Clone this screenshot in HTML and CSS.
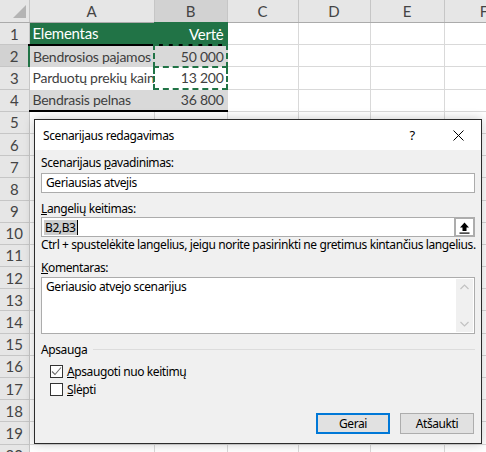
FILE: index.html
```html
<!DOCTYPE html>
<html lang="lt">
<head>
  <meta charset="UTF-8" />
  <title>Scenarijaus redagavimas</title>
  <link rel="stylesheet" href="styles.css">
</head>
<body>
  <div class="sheet">
    <table class="grid">
      <colgroup>
        <col class="c-rh"><col class="c-a"><col class="c-b"><col class="c-c"><col class="c-d"><col class="c-e"><col class="c-f">
      </colgroup>
      <tr class="colhead">
        <th class="corner"><svg width="29" height="22" viewBox="0 0 29 22"><polygon points="13,18 26,18 26,5" fill="#b4b4b4"/></svg></th>
        <th>A</th><th class="sel">B</th><th>C</th><th>D</th><th>E</th><th>F</th>
      </tr>
      <tr class="head-row">
        <th>1</th><td class="tbl-head">Elementas</td><td class="tbl-head num">Vertė</td><td></td><td></td><td></td><td></td>
      </tr>
      <tr>
        <th class="sel">2</th><td class="band">Bendrosios pajamos</td><td class="band num">50 000</td><td></td><td></td><td></td><td></td>
      </tr>
      <tr>
        <th>3</th><td class="plain">Parduotų prekių kaina</td><td class="plain num">13 200</td><td></td><td></td><td></td><td></td>
      </tr>
      <tr class="last-row">
        <th>4</th><td class="band">Bendrasis pelnas</td><td class="band num">36 800</td><td></td><td></td><td></td><td></td>
      </tr>
      <tr><th>5</th><td></td><td></td><td></td><td></td><td></td><td></td></tr>
      <tr><th>6</th><td></td><td></td><td></td><td></td><td></td><td></td></tr>
      <tr><th>7</th><td></td><td></td><td></td><td></td><td></td><td></td></tr>
      <tr><th>8</th><td></td><td></td><td></td><td></td><td></td><td></td></tr>
      <tr><th>9</th><td></td><td></td><td></td><td></td><td></td><td></td></tr>
      <tr><th>10</th><td></td><td></td><td></td><td></td><td></td><td></td></tr>
      <tr><th>11</th><td></td><td></td><td></td><td></td><td></td><td></td></tr>
      <tr><th>12</th><td></td><td></td><td></td><td></td><td></td><td></td></tr>
      <tr><th>13</th><td></td><td></td><td></td><td></td><td></td><td></td></tr>
      <tr><th>14</th><td></td><td></td><td></td><td></td><td></td><td></td></tr>
      <tr><th>15</th><td></td><td></td><td></td><td></td><td></td><td></td></tr>
      <tr><th>16</th><td></td><td></td><td></td><td></td><td></td><td></td></tr>
      <tr><th>17</th><td></td><td></td><td></td><td></td><td></td><td></td></tr>
      <tr><th>18</th><td></td><td></td><td></td><td></td><td></td><td></td></tr>
      <tr><th>19</th><td></td><td></td><td></td><td></td><td></td><td></td></tr>
      <tr><th>20</th><td></td><td></td><td></td><td></td><td></td><td></td></tr>
    </table>

    <!-- copy marquee around B2:B3 -->
    <div class="marquee"><div class="ant"></div><div class="ant"></div></div>

    <div class="dialog">
      <div class="titlebar">
        <span class="title">Scenarijaus redagavimas</span>
        <span class="tb-btn">?</span>
        <span class="tb-btn">
          <svg width="11" height="11" viewBox="0 0 11 11"><path d="M0.5 0.5 L10.5 10.5 M10.5 0.5 L0.5 10.5" stroke="#000" stroke-width="1"/></svg>
        </span>
      </div>
      <div class="dlg-body">
        <div class="lbl">Scenarijaus <u>p</u>avadinimas:</div>
        <div class="field">Geriausias atvejis</div>

        <div class="lbl gap"><u>L</u>angelių keitimas:</div>
        <div class="field ref">
          <span class="ref-text"><span class="hl">B2,B3</span><span class="caret"></span></span>
          <span class="collapse-btn">
            <svg width="13" height="13" viewBox="0 0 13 13">
              <path d="M6.5 1.5 L11 6.5 L8.5 6.5 L8.5 10 L4.5 10 L4.5 6.5 L2 6.5 Z" fill="#000"/>
              <rect x="1.5" y="11.5" width="10" height="1.2" fill="#000"/>
            </svg>
          </span>
        </div>
        <div class="hint">Ctrl + spustelėkite langelius, jeigu norite pasirinkti ne gretimus kintančius langelius.</div>

        <div class="lbl gap-s"><u>K</u>omentaras:</div>
        <div class="memo">
          <span class="memo-text">Geriausio atvejo scenarijus</span>
          <span class="scroll">
            <svg width="9" height="6" viewBox="0 0 9 6"><path d="M0.5 5 L4.5 1 L8.5 5" fill="none" stroke="#c2c2c2" stroke-width="1.2"/></svg>
            <svg width="9" height="6" viewBox="0 0 9 6"><path d="M0.5 1 L4.5 5 L8.5 1" fill="none" stroke="#c2c2c2" stroke-width="1.2"/></svg>
          </span>
        </div>

        <div class="group">
          <span class="group-title">Apsauga</span>
          <span class="group-line"></span>
        </div>
        <div class="check">
          <span class="box">
            <svg width="11" height="11" viewBox="0 0 11 11"><path d="M1 5.5 L4 8.5 L10 1.5" fill="none" stroke="#6d6d6d" stroke-width="1.1"/></svg>
          </span>
          <span><u>A</u>psaugoti nuo keitimų</span>
        </div>
        <div class="check">
          <span class="box"></span>
          <span><u>S</u>lėpti</span>
        </div>

        <div class="actions">
          <span class="btn default">Gerai</span>
          <span class="btn">Atšaukti</span>
        </div>
      </div>
    </div>
  </div>
</body>
</html>
```

FILE: styles.css
```css
html, body {
  margin: 0;
  padding: 0;
  overflow: hidden;
  background: #fff;
}
.sheet {
  position: relative;
  width: 486px;
  height: 452px;
  overflow: hidden;
}

/* worksheet */
.grid {
  border-collapse: collapse;
  table-layout: fixed;
  width: 524px;
  font-family: Lato, "Liberation Sans", sans-serif;
  font-size: 14px;
  letter-spacing: -0.25px;
  color: #3f3f3f;
}
.c-rh { width: 29px; }
.c-a { width: 125px; }
.c-b { width: 73px; }
.c-c { width: 71px; }
.c-d { width: 72px; }
.c-e { width: 74px; }
.c-f { width: 80px; }
.grid tr {
  height: 22.2px;
}
.grid td {
  border-right: 1px solid #d9d9d9;
  border-bottom: 1px solid #d9d9d9;
  padding: 0 3px;
  white-space: nowrap;
  overflow: hidden;
  text-overflow: clip;
}
.grid th {
  background: #e6e6e6;
  color: #444;
  font-weight: normal;
  font-size: 15px;
  letter-spacing: 0;
  border-right: 1px solid #c6c6c6;
  border-bottom: 1px solid #c6c6c6;
  padding: 0;
  text-align: center;
}
.colhead {
  height: 22px;
}
.colhead th {
  border-bottom: 1px solid #ababab;
}
.grid th.corner {
  padding: 0;
  line-height: 0;
}
.colhead th.sel {
  background: #d2d2d2;
  border-bottom: 2px solid #217346;
}
.grid tr th.sel {
  background: #d2d2d2;
}
tr th.sel:first-child {
  border-right: 2px solid #217346;
}
.tbl-head {
  background: #217346;
  color: #fff;
  font-size: 15px;
}
.grid td.tbl-head {
  border-right-color: #217346;
  border-bottom: 2px solid #000;
}
.band {
  background: #d9d9d9;
}
.grid td.band {
  border-right-color: #d9d9d9;
}
.grid td.plain {
  border-right-color: #fff;
  border-bottom-color: #fff;
}
.last-row td.band {
  border-bottom: 2px solid #000;
}
.num {
  text-align: right;
}

.marquee {
  position: absolute;
  left: 153px;
  top: 44px;
  width: 75px;
  display: flex;
  flex-direction: column;
}
.ant {
  height: 20px;
  border: 2px dashed #217346;
}
.ant + .ant {
  border-top: none;
  height: 20px;
}

/* dialog */
.dialog {
  position: absolute;
  left: 34px;
  top: 119px;
  width: 446px;
  height: 323px;
  border: 1px solid #2b2b2b;
  background: #f0f0f0;
  box-shadow: 0 0 10px rgba(0, 0, 0, 0.22);
  font-family: "Noto Sans", "Open Sans", sans-serif;
  font-size: 12px;
  letter-spacing: -0.4px;
  color: #000;
  display: flex;
  flex-direction: column;
}
.titlebar {
  height: 30px;
  background: #fff;
  display: flex;
  align-items: center;
}
.title {
  flex: 1;
  padding-left: 8px;
}
.tb-btn {
  width: 46px;
  height: 30px;
  display: flex;
  align-items: center;
  justify-content: center;
  font-size: 13px;
}
.dlg-body {
  flex: 1;
  padding: 5px 6px 0 6px;
  display: flex;
  flex-direction: column;
}
.lbl {
  height: 16px;
  line-height: 16px;
}
.lbl.gap { margin-top: 8px; }
.lbl.gap-s { margin-top: 7px; }
.lbl:first-child { margin-bottom: 2px; }
.field {
  height: 18px;
  border: 1px solid #acacac;
  background: #fff;
  line-height: 18px;
  padding-left: 4px;
  display: flex;
}
.field.ref {
  padding-left: 2px;
  align-items: center;
}
.ref-text {
  flex: 1;
  display: flex;
  align-items: center;
}
.hl {
  background: #cccccc;
  line-height: 15px;
  padding: 0 1px;
}
.caret {
  width: 1px;
  height: 15px;
  background: #000;
}
.collapse-btn {
  width: 17px;
  height: 16px;
  border: 2px solid #adadad;
  border-right-width: 1px;
  background: #fff;
  display: flex;
  align-items: center;
  justify-content: center;
}
.hint {
  height: 16px;
  line-height: 16px;
  white-space: nowrap;
}
.memo {
  margin-top: 1px;
  height: 55px;
  border: 1px solid #acacac;
  background: #fff;
  display: flex;
}
.memo-text {
  flex: 1;
  padding: 1px 4px;
  line-height: 16px;
}
.scroll {
  width: 17px;
  margin: 1px;
  background: #f0f0f0;
  display: flex;
  flex-direction: column;
  justify-content: space-between;
  align-items: center;
  padding: 5px 0;
}
.group {
  margin-top: 7px;
  height: 16px;
  display: flex;
  align-items: center;
  gap: 6px;
}
.group-line {
  flex: 1;
  height: 1px;
  background: #dcdcdc;
}
.check {
  height: 16px;
  display: flex;
  align-items: center;
  gap: 4px;
  padding-left: 9px;
  margin-top: 2px;
}
.group + .check {
  margin-top: 6px;
}
.box {
  width: 11px;
  height: 11px;
  border: 1px solid #333;
  background: #fff;
  display: flex;
}
.actions {
  margin-top: 16px;
  display: flex;
  justify-content: flex-end;
  gap: 10px;
  padding-right: 1px;
}
.btn {
  width: 72px;
  height: 19px;
  border: 1px solid #adadad;
  background: #e1e1e1;
  display: flex;
  align-items: center;
  justify-content: center;
}
.btn.default {
  width: 70px;
  height: 17px;
  border: 2px solid #0078d7;
}
```
